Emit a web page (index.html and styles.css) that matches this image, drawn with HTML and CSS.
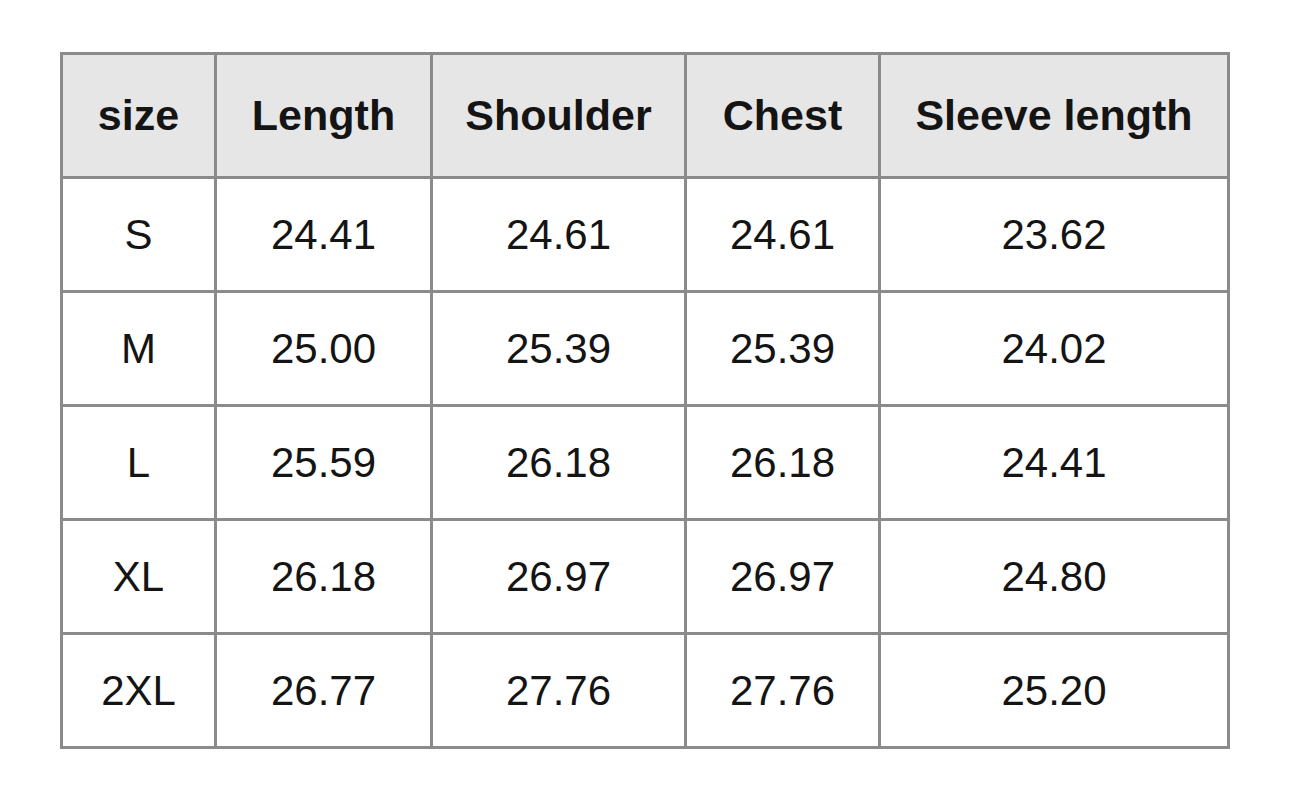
FILE: index.html
```html
<!DOCTYPE html>
<html>
<head>
<meta charset="utf-8">
<link rel="stylesheet" href="styles.css">
</head>
<body>
<table class="size-table">
  <colgroup>
    <col class="c1"><col class="c2"><col class="c3"><col class="c4"><col class="c5">
  </colgroup>
  <thead>
    <tr class="head-row">
      <th>size</th><th>Length</th><th>Shoulder</th><th>Chest</th><th>Sleeve length</th>
    </tr>
  </thead>
  <tbody>
    <tr><td>S</td><td>24.41</td><td>24.61</td><td>24.61</td><td>23.62</td></tr>
    <tr><td>M</td><td>25.00</td><td>25.39</td><td>25.39</td><td>24.02</td></tr>
    <tr><td>L</td><td>25.59</td><td>26.18</td><td>26.18</td><td>24.41</td></tr>
    <tr><td>XL</td><td>26.18</td><td>26.97</td><td>26.97</td><td>24.80</td></tr>
    <tr><td>2XL</td><td>26.77</td><td>27.76</td><td>27.76</td><td>25.20</td></tr>
  </tbody>
</table>
</body>
</html>
```
FILE: styles.css
```css
html, body {
  margin: 0;
  background: #ffffff;
}
body {
  padding: 52px 0 0 60px;
  font-family: "Liberation Sans", Arial, sans-serif;
  color: #141414;
}
.size-table {
  border-collapse: collapse;
  table-layout: fixed;
  width: 1170px;
}
.c1 { width: 154px; }
.c2 { width: 216px; }
.c3 { width: 254px; }
.c4 { width: 194px; }
.c5 { width: 349px; }
.size-table th,
.size-table td {
  border: 3px solid #8b8b8b;
  text-align: center;
  vertical-align: middle;
  padding: 0;
  line-height: 1;
}
.size-table th {
  background: #e6e6e6;
  font-weight: 700;
  font-size: 43px;
  height: 121px;
}
.size-table td {
  font-weight: 400;
  font-size: 42px;
  height: 111px;
}
```
